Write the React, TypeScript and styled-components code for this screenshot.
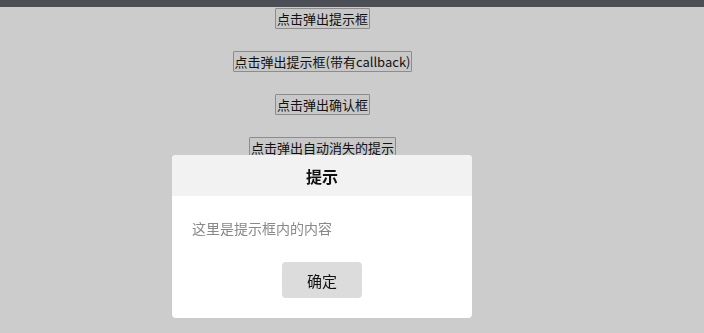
import * as React from 'react';
import styled, { createGlobalStyle } from 'styled-components';

const GlobalStyle = createGlobalStyle`
  html, body {
    margin: 0;
    padding: 0;
    background: #cccccc;
    font-family: "Noto Sans CJK SC", "Noto Sans", sans-serif;
  }
`;

const TopBar = styled.div`
  height: 7px;
  background: #4c4f56;
`;

const Page = styled.div`
  width: 645px;
  display: flex;
  flex-direction: column;
  align-items: center;
  gap: 22px;
  padding-top: 1px;
`;

const DemoButton = styled.button`
  height: 21px;
  padding: 0 1px;
  font-family: "Noto Sans CJK SC", sans-serif;
  font-size: 13px;
  line-height: 19px;
  color: #111;
  background: #c8c8c8;
  border: 1px solid #8c8c8c;
  border-radius: 1px;
  white-space: nowrap;
`;

const Modal = styled.div`
  position: fixed;
  left: 172px;
  top: 155px;
  width: 300px;
  background: #fff;
  border-radius: 4px;
  overflow: hidden;
`;

const ModalHead = styled.div`
  height: 41px;
  background: #f2f2f2;
  display: flex;
  align-items: center;
  justify-content: center;
  font-size: 16px;
  font-weight: bold;
  color: #111;
`;

const ModalBody = styled.div`
  padding: 22px 20px 20px;
  display: flex;
  flex-direction: column;
`;

const Message = styled.p`
  margin: 0;
  font-size: 14px;
  line-height: 20px;
  color: #888;
`;

const OkButton = styled.button`
  align-self: center;
  margin-top: 24px;
  width: 80px;
  height: 36px;
  border: none;
  border-radius: 4px;
  background: #dcdcdc;
  font-family: "Noto Sans CJK SC", sans-serif;
  font-size: 15px;
  color: #111;
`;

export default function App() {
  return (
    <>
      <GlobalStyle />
      <TopBar />
      <Page>
        <DemoButton>点击弹出提示框</DemoButton>
        <DemoButton>点击弹出提示框(带有callback)</DemoButton>
        <DemoButton>点击弹出确认框</DemoButton>
        <DemoButton>点击弹出自动消失的提示</DemoButton>
      </Page>
      <Modal>
        <ModalHead>提示</ModalHead>
        <ModalBody>
          <Message>这里是提示框内的内容</Message>
          <OkButton>确定</OkButton>
        </ModalBody>
      </Modal>
    </>
  );
}
